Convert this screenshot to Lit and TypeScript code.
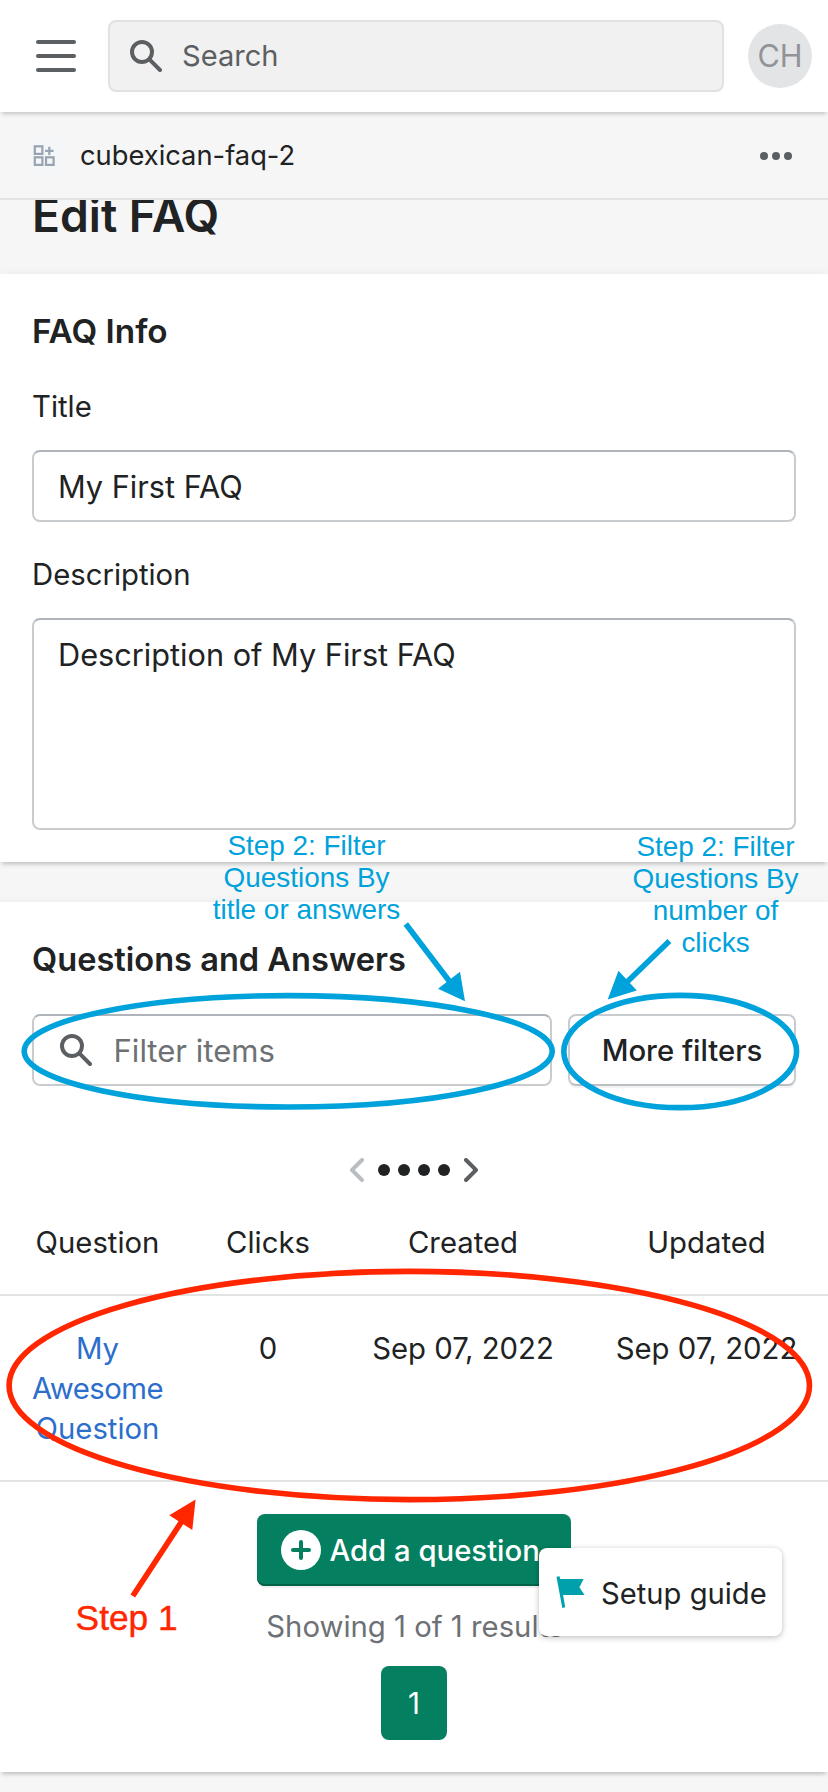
import { LitElement, html, svg, css } from "lit";
import { customElement } from "lit/decorators.js";

const searchIcon = html`<svg class="search-icon" viewBox="2 2 16 16" fill="#5c5f62">
  <path d="M8 12a4 4 0 1 1 0-8 4 4 0 0 1 0 8zm9.707 4.293-4.82-4.82A5.968 5.968 0 0 0 14 8 6 6 0 0 0 2 8a6 6 0 0 0 6 6 5.968 5.968 0 0 0 3.473-1.113l4.82 4.82a.997.997 0 0 0 1.414 0 .999.999 0 0 0 0-1.414z" />
</svg>`;

const chevronPath =
  "M12 16a.997.997 0 0 1-.707-.293l-5-5a.999.999 0 0 1 0-1.414l5-5a.999.999 0 1 1 1.414 1.414L8.414 10l4.293 4.293A.999.999 0 0 1 12 16z";

interface Note {
  x: number;
  y: number;
  text: string;
}

const notes: Note[] = [
  { x: 306.5, y: 855, text: "Step 2: Filter" },
  { x: 306.5, y: 887, text: "Questions By" },
  { x: 306.5, y: 919, text: "title or answers" },
  { x: 715.5, y: 856, text: "Step 2: Filter" },
  { x: 715.5, y: 888, text: "Questions By" },
  { x: 715.5, y: 920, text: "number of" },
  { x: 715.5, y: 952, text: "clicks" },
];

/** Hand-drawn style callouts laid over the page. */
@customElement("callout-layer")
export class CalloutLayer extends LitElement {
  static styles = css`
    :host {
      position: absolute;
      inset: 0;
      pointer-events: none;
    }
    svg {
      display: block;
      width: 828px;
      height: 1792px;
    }
    .note {
      font: 27.9px "Liberation Sans", Arial, sans-serif;
      fill: #00a2db;
      text-anchor: middle;
    }
    .step {
      font: 35.3px "Liberation Sans", Arial, sans-serif;
      fill: #ff2600;
      stroke: #ff2600;
      stroke-width: 0.4px;
    }
    .ring {
      fill: none;
      stroke-width: 5.6px;
    }
    .blue {
      stroke: #00a2db;
    }
    .red {
      stroke: #ff2600;
    }
    .blue-head {
      fill: #00a2db;
    }
    .red-head {
      fill: #ff2600;
    }
  `;

  render() {
    return html`<svg viewBox="0 0 828 1792">
      <ellipse class="ring blue" cx="288.2" cy="1051.3" rx="264" ry="55.7" />
      <ellipse class="ring blue" cx="680.2" cy="1051.5" rx="116.4" ry="56.1" />
      <ellipse class="ring red" cx="409.3" cy="1385.5" rx="400.2" ry="114.1" />
      <path class="ring blue" d="M405.8 924 450 982" />
      <path class="blue-head" d="M465 1001.3 460 971.7 438 988.7z" />
      <path class="ring blue" d="M669.4 941 627 982" />
      <path class="blue-head" d="M607.7 999.5 618.5 970.8 636.8 990.5z" />
      <path class="ring red" d="M132.8 1596 182 1521" />
      <path class="red-head" d="M195.6 1499.5 169.3 1515.3 192.3 1530z" />
      ${notes.map((n) => svg`<text class="note" x=${n.x} y=${n.y}>${n.text}</text>`)}
      <text class="step" x="75.6" y="1630">Step 1</text>
    </svg>`;
  }
}

@customElement("app-root")
export class AppRoot extends LitElement {
  static styles = css`
    :host {
      display: block;
      position: relative;
      width: 828px;
      height: 1792px;
      overflow: hidden;
      background: #f6f6f6;
      color: #202223;
      font: 400 29.3px/40px "Inter", sans-serif;
    }
    * {
      box-sizing: border-box;
    }
    svg {
      display: block;
      flex: none;
    }
    .topbar {
      position: relative;
      z-index: 1;
      display: flex;
      align-items: center;
      height: 112px;
      padding: 0 16px 0 36px;
      background: #fff;
      box-shadow: 0 4px 4px -2px rgba(0, 0, 0, 0.2);
    }
    .burger {
      display: grid;
      gap: 10px;
      width: 40px;
      margin-right: 32px;
    }
    .bar {
      height: 4px;
      border-radius: 2px;
      background: #5c5f62;
    }
    .search {
      display: flex;
      align-items: center;
      gap: 20px;
      width: 616px;
      height: 72px;
      padding-left: 20px;
      margin-right: 24px;
      border: 2px solid #e1e3e3;
      border-radius: 8px;
      background: #f1f1f1;
      color: #5c5f62;
      font-size: 29.1px;
    }
    .search-icon {
      width: 32px;
      height: 32px;
    }
    .avatar {
      width: 64px;
      height: 64px;
      border-radius: 50%;
      background: #e3e4e6;
      color: #919397;
      font-size: 30.6px;
      line-height: 64px;
      text-align: center;
    }
    .appbar {
      display: flex;
      align-items: center;
      height: 88px;
      padding: 2px 36px 0 24px;
      border-bottom: 2px solid #e1e3e4;
      font-size: 27.3px;
    }
    .appbar-icon {
      width: 40px;
      height: 40px;
      margin-right: 16px;
    }
    .appbar-name {
      flex: 1;
    }
    .heading {
      height: 74px;
      margin: 0;
      padding-left: 32px;
      overflow: hidden;
      font-size: 46.2px;
      font-weight: 600;
      line-height: 30px;
    }
    .card {
      background: #fff;
      box-shadow: 0 0 10px rgba(23, 24, 24, 0.05), 0 4px 4px -2px rgba(0, 0, 0, 0.2);
    }
    .info {
      height: 588px;
      padding: 37px 32px 0;
    }
    .qa {
      height: 870px;
      margin-top: 40px;
      padding-top: 37px;
    }
    h2 {
      margin: 0 0 35px;
      font-size: 32.6px;
      font-weight: 600;
      line-height: 40px;
    }
    .info h2 {
      margin-bottom: 36px;
      font-size: 33.3px;
    }
    .label {
      display: block;
      margin-bottom: 23px;
    }
    .field {
      border: 2px solid #c9cccf;
      border-top-color: #aeb4b9;
      border-radius: 8px;
      background: #fff;
      font-size: 30.7px;
    }
    .line {
      height: 72px;
      margin-bottom: 33px;
      padding: 15px 24px;
    }
    .area {
      height: 212px;
      padding: 15px 24px;
    }
    .qa h2 {
      padding-left: 32px;
    }
    .filters {
      display: flex;
      gap: 16px;
      padding: 0 32px;
    }
    .filter {
      display: flex;
      flex: 1;
      align-items: center;
      gap: 21.5px;
      height: 72px;
      padding-left: 26px;
      color: #6d7175;
      font-size: 31.1px;
    }
    .filter-text {
      padding-top: 2px;
    }
    .more {
      width: 228px;
      height: 72px;
      border: 2px solid #c9cccf;
      border-bottom-color: #babfc3;
      border-radius: 8px;
      box-shadow: 0 2px 0 rgba(0, 0, 0, 0.05);
      font-weight: 500;
      line-height: 70px;
      text-align: center;
    }
    .carousel {
      display: flex;
      align-items: center;
      justify-content: center;
      gap: 8px;
      margin: 72px 0 41px;
    }
    .chevron {
      width: 14px;
      height: 24px;
      margin: 0 6px;
    }
    .dot {
      width: 12px;
      height: 12px;
      border-radius: 50%;
      background: #202223;
    }
    .row {
      display: grid;
      grid-template-columns: 195px 146px 244px 243px;
      text-align: center;
      border-bottom: 2px solid #e1e3e4;
    }
    .head {
      padding-bottom: 31px;
    }
    .body {
      padding: 33px 0 31px;
    }
    .link {
      padding: 0 32px;
      color: #2c6ecb;
    }
    .awesome {
      letter-spacing: -0.5px;
    }
    .footer {
      display: flex;
      flex-direction: column;
      align-items: center;
      padding-top: 32px;
    }
    .add {
      display: flex;
      align-items: center;
      gap: 8.4px;
      width: 314px;
      height: 72px;
      padding-left: 24px;
      border-radius: 8px;
      background: #048060;
      box-shadow: inset 0 -2px 0 #036349, 0 2px 0 rgba(0, 0, 0, 0.06);
      color: #fff;
      font-weight: 500;
      white-space: nowrap;
    }
    .add-text {
      padding-top: 2px;
    }
    .results {
      margin: 21px 0 19px;
      padding-left: 2px;
      color: #6d7175;
    }
    .page {
      width: 66px;
      height: 74px;
      border-radius: 8px;
      background: #048060;
      color: #fff;
      line-height: 76px;
      text-align: center;
    }
    .guide {
      position: absolute;
      right: 46px;
      bottom: 156px;
      display: flex;
      align-items: center;
      gap: 15px;
      width: 243px;
      height: 88px;
      padding-left: 17px;
      border-radius: 8px;
      background: #fff;
      box-shadow: 0 0 4px rgba(23, 24, 24, 0.08), 0 2px 6px rgba(0, 0, 0, 0.2);
      font-size: 29.2px;
    }
    .guide-text {
      padding-top: 3px;
    }
  `;

  render() {
    return html`
      <header class="topbar">
        <div class="burger">
          <div class="bar"></div>
          <div class="bar"></div>
          <div class="bar"></div>
        </div>
        <div class="search">${searchIcon}<span>Search</span></div>
        <div class="avatar">CH</div>
      </header>
      <div class="appbar">
        <svg class="appbar-icon" viewBox="0 0 40 40">
          <rect width="40" height="40" rx="4" fill="#f4f6f8" />
          <g fill="none" stroke="#98a4b1" stroke-width="2.2">
            <rect x="10.8" y="10.3" width="7.6" height="7.6" />
            <rect x="10.8" y="21.3" width="7.6" height="7.6" />
            <rect x="22" y="21.3" width="7.6" height="7.6" />
            <path d="M25.3 10.7v8.4M21.1 14.9h8.4" />
          </g>
        </svg>
        <span class="appbar-name">cubexican-faq-2</span>
        <svg width="32" height="8" viewBox="0 0 32 8" fill="#5c5f62">
          <circle cx="4" cy="4" r="4" />
          <circle cx="16" cy="4" r="4" />
          <circle cx="28" cy="4" r="4" />
        </svg>
      </div>
      <h1 class="heading">Edit FAQ</h1>
      <section class="card info">
        <h2>FAQ Info</h2>
        <span class="label">Title</span>
        <div class="field line">My First FAQ</div>
        <span class="label">Description</span>
        <div class="field area">Description of My First FAQ</div>
      </section>
      <section class="card qa">
        <h2>Questions and Answers</h2>
        <div class="filters">
          <div class="field filter">${searchIcon}<span class="filter-text">Filter items</span></div>
          <div class="more">More filters</div>
        </div>
        <div class="carousel">
          <svg class="chevron" viewBox="6 4 7 12" fill="#babec3"><path d=${chevronPath} /></svg>
          <div class="dot"></div>
          <div class="dot"></div>
          <div class="dot"></div>
          <div class="dot"></div>
          <svg class="chevron" viewBox="6 4 7 12" fill="#5c5f62">
            <path transform="translate(19 0) scale(-1 1)" d=${chevronPath} />
          </svg>
        </div>
        <div class="row head">
          <div>Question</div>
          <div>Clicks</div>
          <div>Created</div>
          <div>Updated</div>
        </div>
        <div class="row body">
          <div class="link">My <span class="awesome">Awesome</span> Question</div>
          <div>0</div>
          <div>Sep 07, 2022</div>
          <div>Sep 07, 2022</div>
        </div>
        <div class="footer">
          <div class="add">
            <svg width="40" height="40" viewBox="0 0 40 40">
              <circle cx="20" cy="20" r="20" fill="#fff" />
              <path d="M20 12v16M12 20h16" stroke="#048060" stroke-width="4" stroke-linecap="round" />
            </svg>
            <span class="add-text">Add a question</span>
          </div>
          <div class="results">Showing 1 of 1 results</div>
          <div class="page">1</div>
        </div>
      </section>
      <div class="guide">
        <svg width="30" height="32" viewBox="0 0 30 32" fill="#00a0ac">
          <path d="M.5.8 3.6.3 4.1 3H27.6L23.4 11.2 28.6 19H7.1L9.2 31.2 6.3 31.9z" />
        </svg>
        <span class="guide-text">Setup guide</span>
      </div>
      <callout-layer></callout-layer>
    `;
  }
}
